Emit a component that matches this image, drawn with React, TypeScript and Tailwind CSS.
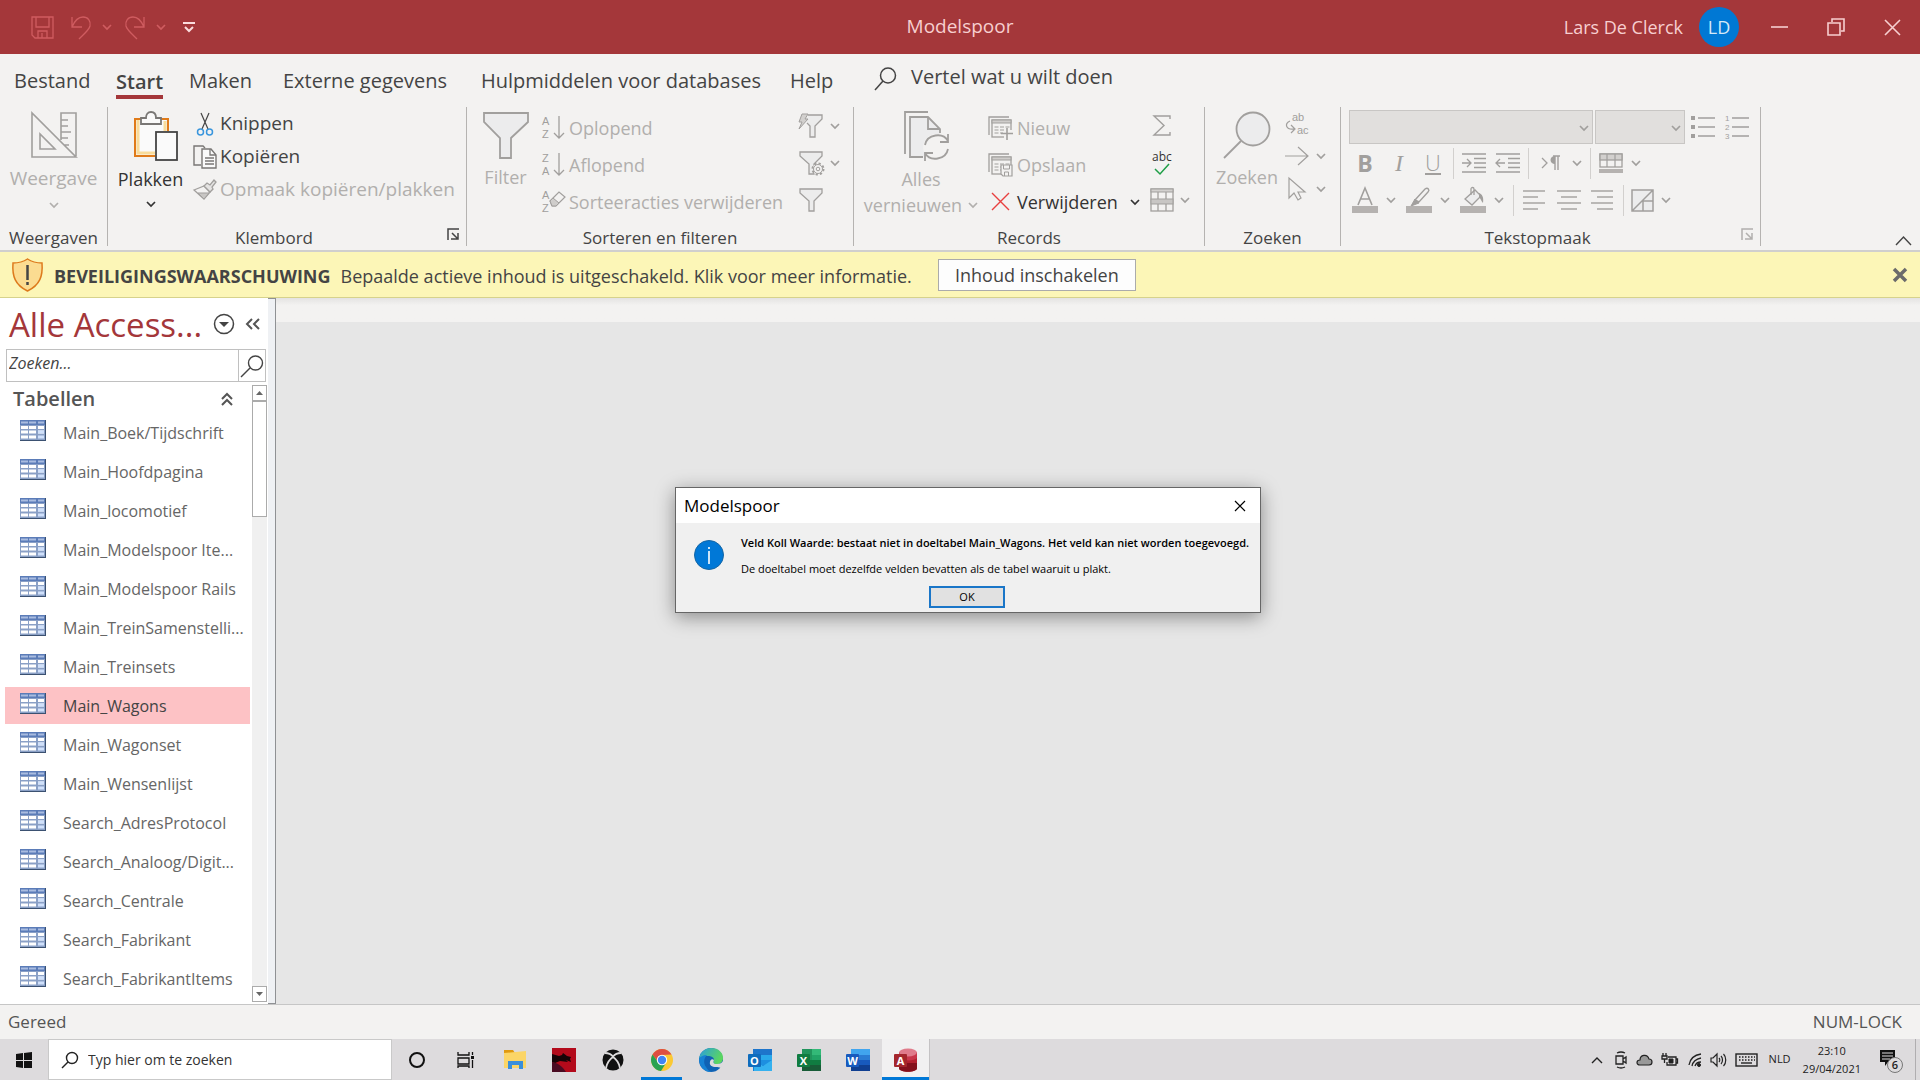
import type { ReactNode } from 'react';

function Svg({ w, h, className = '', children }: { w: number; h: number; className?: string; children: ReactNode }) {
  return (
    <svg width={w} height={h} viewBox={`0 0 ${w} ${h}`} fill="none" stroke="currentColor" className={`shrink-0 overflow-visible ${className}`} aria-hidden="true">
      {children}
    </svg>
  );
}

function Chevron({ className = '' }: { className?: string }) {
  return (
    <Svg w={10} h={6} className={className}>
      <path d="M1 1l4 4 4-4" strokeWidth="1.7" />
    </Svg>
  );
}

function TitleBar() {
  return (
    <header className="flex h-[54px] shrink-0 items-center bg-[#a4373a] text-[#f7cfd0]">
      <div className="flex flex-1 items-center text-[#cf5c60]">
        <button aria-label="Opslaan" className="ml-[31px]">
          <Svg w={23} h={23}>
            <path d="M1 1h21v21H4l-3-3zM5 1v10h13V1M7 22v-7h9v7M11 17v5" strokeWidth="1.3" />
          </Svg>
        </button>
        <button aria-label="Ongedaan maken" className="ml-4 flex items-center gap-2.5">
          <Svg w={22} h={25}>
            <path d="M2 2v10h10M2 12C5 5 9 2 13 2c5 0 8 4 7 9-1 4-6 8-11 13" strokeWidth="1.3" />
          </Svg>
          <Chevron />
        </button>
        <button aria-label="Opnieuw" className="ml-3 flex items-center gap-2.5">
          <Svg w={22} h={25}>
            <path d="M20 2v10H10M20 12C17 5 13 2 9 2 4 2 1 6 2 11c1 4 6 8 11 13" strokeWidth="1.3" />
          </Svg>
          <Chevron />
        </button>
        <button aria-label="Werkbalk Snelle toegang aanpassen" className="ml-[17px] text-[#fbdcdd]">
          <Svg w={12} h={11}>
            <path d="M0 1h12M2 5l4 4 4-4" strokeWidth="2" />
          </Svg>
        </button>
      </div>
      <h1 className="pb-0.5 text-[19px]">Modelspoor</h1>
      <div className="flex flex-1 items-center justify-end">
        <span className="text-lg">Lars De Clerck</span>
        <span className="ml-4 flex size-10 items-center justify-center rounded-full bg-[#0078d4] text-lg text-[#d5e9f8]">LD</span>
        <button aria-label="Minimaliseren" className="ml-8">
          <Svg w={17} h={18}><path d="M0 9h17" strokeWidth="1.6" /></Svg>
        </button>
        <button aria-label="Verkleinen" className="ml-[39px]">
          <Svg w={18} h={18}><path d="M1 5h12v12H1zM5 4V1h12v12h-3" strokeWidth="1.6" /></Svg>
        </button>
        <button aria-label="Sluiten" className="mr-[19px] ml-[39px]">
          <Svg w={17} h={17}><path d="M1 1l15 15M16 1L1 16" strokeWidth="1.6" /></Svg>
        </button>
      </div>
    </header>
  );
}

const tabs = [
  { label: 'Bestand', cls: 'w-[102px]' },
  { label: 'Start', cls: 'w-[73px]' },
  { label: 'Maken', cls: 'w-[94px]' },
  { label: 'Externe gegevens', cls: 'w-[198px]' },
  { label: 'Hulpmiddelen voor databases', cls: 'w-[309px]' },
  { label: 'Help', cls: 'w-[84px]' },
];

function Tabs() {
  return (
    <nav className="flex h-[50px] items-center pl-3.5 text-xl text-[#444]">
      {tabs.map((t) => (
        <div key={t.label} className={`shrink-0 ${t.cls}`}>
          {t.label === 'Start' ? (
            <button className="mt-2 border-b-4 border-[#a4373a] leading-[27px] font-semibold whitespace-nowrap">{t.label}</button>
          ) : (
            <button className="mt-1 leading-[27px] whitespace-nowrap">{t.label}</button>
          )}
        </div>
      ))}
      <button className="flex items-center gap-3.5 pb-1 whitespace-nowrap">
        <Svg w={23} h={24} className="mt-1">
          <circle cx="14" cy="8.500" r="7.500" strokeWidth="1.5" />
          <path d="M9 14l-8 9" strokeWidth="1.500" />
        </Svg>
        Vertel wat u wilt doen
      </button>
    </nav>
  );
}

function Launcher({ className = '' }: { className?: string }) {
  return (
    <button aria-label="Dialoogvenster openen" className={className}>
      <Svg w={13} h={13}>
        <path d="M1 12V1h11M5 5l6 6M11 5v6H4" strokeWidth="1.5" />
      </Svg>
    </button>
  );
}

function Group({ label, cls, launcher, children }: { label: string; cls: string; launcher?: string; children: ReactNode }) {
  return (
    <section aria-label={label} className={`flex h-[139px] shrink-0 flex-col border-r border-[#b5b3b1] ${cls}`}>
      <div className="flex h-[122px] shrink-0">{children}</div>
      <div className={`relative flex h-[18px] items-center justify-center text-[17px] leading-[18px] text-[#444] ${launcher ? 'pr-[26px]' : ''}`}>
        {label}
        {launcher && <Launcher className={`absolute right-1.5 bottom-1.5 ${launcher}`} />}
      </div>
    </section>
  );
}

function Row({ icon, label, cls = 'h-[37px] gap-[5px] text-lg' }: { icon: ReactNode; label: string; cls?: string }) {
  return (
    <button className={`flex items-center whitespace-nowrap ${cls}`}>
      <span className="flex w-6 shrink-0 justify-center">{icon}</span>
      {label}
    </button>
  );
}

function SortIcon({ top, bottom, eraser }: { top: string; bottom: string; eraser?: boolean }) {
  return (
    <Svg w={26} h={25} className='font-["Liberation_Sans",sans-serif] text-[#a19f9d]'>
      <text x="3" y="10" fontSize="11" fill="currentColor" stroke="none">{top}</text>
      <text x="3" y="23" fontSize="11" fill="currentColor" stroke="none">{bottom}</text>
      {eraser ? (
        <>
          <path d="M11 12l9-9 6 5-9 9-4 0z" strokeWidth="1.200" />
          <path d="M11 12l3-3 6 5-3 3h-4z" fill="#cfcdcb" strokeWidth="1" />
        </>
      ) : (
        <path d="M20 1v22M15 18l5 5 5-5" strokeWidth="1.3" />
      )}
    </Svg>
  );
}

function FunnelIcon({ kind }: { kind: 'bolt' | 'gear' | 'plain' }) {
  return (
    <Svg w={26} h={26} className="text-[#a19f9d]">
      {kind === 'bolt' ? (
        <>
          <path d="M10 2h14v4l-7 7v11h-5V13l-3-3" fill="#ececec" strokeWidth="1.3" />
          <path d="M4 1h6L7 6h3L1 16l3-7H1z" fill="#d2d0ce" strokeWidth="1" />
        </>
      ) : (
        <path d="M2 2h22v4l-8 8v10h-5V14L2 6z" fill="#ececec" strokeWidth="1.3" />
      )}
      {kind === 'gear' && (
        <>
          <circle cx="20" cy="19" r="5.500" fill="#f3f2f1" strokeWidth="2" strokeDasharray="2.2 2.1" />
          <circle cx="20" cy="19" r="4.500" fill="#f3f2f1" strokeWidth="1" />
          <circle cx="20" cy="19" r="1.800" strokeWidth="1" />
        </>
      )}
    </Svg>
  );
}

function RecordIcon({ save }: { save?: boolean }) {
  return (
    <Svg w={25} h={24} className="text-[#a19f9d]">
      <path d="M1 19V1h20" strokeWidth="1.300" />
      <rect x="4" y="4" width="19" height="17" strokeWidth="1.3" />
      <rect x="4" y="4" width="19" height="3" fill="#cfcdcb" strokeWidth="1" />
      <path d="M6.500 11h4M12 11h4M17.500 11h4M6.500 14h4M12 14h4M6.500 17h4M12 17h3" strokeWidth="1.200" />
      {save ? (
        <>
          <path d="M13 12h11v11H15l-2-2z" fill="#f3f2f1" strokeWidth="1.200" />
          <path d="M15.500 12v4h6v-4M16.500 23v-4h4v4" strokeWidth="1" />
        </>
      ) : (
        <>
          <path d="M16 14h8v8h-8z" fill="#f3f2f1" stroke="none" />
          <path d="M19 12v12M13 17.500h12" strokeWidth="1.600" />
        </>
      )}
    </Svg>
  );
}

function RowsIcon() {
  return (
    <Svg w={24} h={24} className="text-[#a19f9d]">
      <rect x="1" y="1" width="22" height="22" strokeWidth="1.3" />
      <rect x="1" y="1" width="22" height="3" fill="#d2d0ce" strokeWidth="1" />
      <rect x="1" y="11" width="22" height="5" fill="#c8c6c4" strokeWidth="1" />
      <path d="M8 4v7M16 4v7M8 16v7M16 16v7" strokeWidth="1.3" />
    </Svg>
  );
}

function Klembord() {
  return (
    <Group label="Klembord" cls="w-[359px]" launcher="text-[#444]">
      <button className="flex w-[85px] flex-col items-center pt-1 text-lg leading-6 text-[#333]">
        <Svg w={46} h={50} className="ml-2.5">
          <path d="M8 8H2v37h20" stroke="#e07b1a" strokeWidth="2" fill="none" />
          <path d="M28 8h7v12" stroke="#e07b1a" strokeWidth="2" />
          <path d="M4 9h29v11H23v24H4z" fill="#fafafa" stroke="none" />
          <path d="M5 9v33h17M32 10v10" stroke="#f9dc9a" strokeWidth="3" />
          <path d="M8 13V7h5c0-4 2-6 5-6s5 2 5 6h5v6z" fill="#fafafa" stroke="#797775" strokeWidth="1.800" />
          <rect x="23" y="21" width="21" height="28" fill="#fafafa" stroke="#444" strokeWidth="1.800" />
        </Svg>
        <span className="mt-1.5">Plakken</span>
        <Chevron className="mt-2.5" />
      </button>
      <div className="flex flex-col items-start text-[#444]">
        <Row cls="h-[33px] gap-[3px] text-[19px]" label="Knippen" icon={
          <Svg w={18} h={24}>
            <path d="M5 1l7 16M13 1L6 17" strokeWidth="1.200" />
            <g stroke="#3a96dd" strokeWidth="1.500"><circle cx="4.500" cy="20" r="3" /><circle cx="13.500" cy="20" r="3" /></g>
          </Svg>
        } />
        <Row cls="h-[33px] gap-[3px] text-[19px]" label="Kopiëren" icon={
          <Svg w={24} h={24} className="text-[#797775]">
            <path d="M8 20H1V1h9l2 2" strokeWidth="1.400" />
            <path d="M9 4h9l5 6v13H9z" fill="#fafafa" strokeWidth="1.400" />
            <path d="M17 4v6h6M12 13h9M12 16h9M12 19h9" strokeWidth="1.300" />
          </Svg>
        } />
        <Row cls="h-[33px] gap-[3px] text-[19px] text-[#b1afad]" label="Opmaak kopiëren/plakken" icon={
          <Svg w={24} h={22} className="text-[#a19f9d]">
            <path d="M1 11l10-4 6 6-6 7z" fill="#f3f2f1" strokeWidth="1.300" />
            <path d="M5 14l11 0-5 6z" fill="#c8c6c4" strokeWidth="1" />
            <path d="M11 7l3-3 3 2 4-5 2 2-4 5 1 2-3 3z" fill="#e4e3e2" strokeWidth="1.300" />
          </Svg>
        } />
      </div>
    </Group>
  );
}

function Sorteren() {
  return (
    <Group label="Sorteren en filteren" cls="w-[387px]">
      <button className="flex w-[73px] flex-col items-center pt-[5px] pl-1 text-lg leading-6 text-[#b1afad]">
        <Svg w={46} h={47} className="text-[#a19f9d]">
          <path d="M1 1h44v9L28 26v20H17V26L1 10z" fill="#ececed" strokeWidth="1.800" />
        </Svg>
        <span className="mt-1.5">Filter</span>
      </button>
      <div className="flex flex-1 flex-col items-start pt-0.5 text-[#b1afad]">
        <Row label="Oplopend" icon={<SortIcon top="A" bottom="Z" />} />
        <Row label="Aflopend" icon={<SortIcon top="Z" bottom="A" />} />
        <Row label="Sorteeracties verwijderen" icon={<SortIcon top="A" bottom="Z" eraser />} />
      </div>
      <div className="flex w-[55px] shrink-0 flex-col text-[#a19f9d]">
        <button aria-label="Selectie" className="flex h-[37px] items-center gap-1.5"><FunnelIcon kind="bolt" /><Chevron /></button>
        <button aria-label="Geavanceerd" className="flex h-[37px] items-center gap-1.5"><FunnelIcon kind="gear" /><Chevron /></button>
        <button aria-label="Filter in-/uitschakelen" className="flex h-[37px] items-center"><FunnelIcon kind="plain" /></button>
      </div>
    </Group>
  );
}

function Records() {
  return (
    <Group label="Records" cls="w-[351px]">
      <button className="flex w-[134px] flex-col items-center pt-1 text-lg leading-[26px] whitespace-nowrap text-[#b1afad]">
        <Svg w={46} h={50} className="ml-3 text-[#a19f9d]">
          <path d="M1 43V1h23" strokeWidth="1.800" />
          <path d="M19 46H6V6h18l12 12v4" fill="#ececed" strokeWidth="1.800" />
          <path d="M24 6v12h12" strokeWidth="1.800" />
          <circle cx="32" cy="36" r="12" fill="#f3f2f1" strokeWidth="1.800" stroke="#f3f2f1" />
          <path d="M21 34c2-11 18-13 23-4M44 23v8h-8M44 38c-2 11-18 13-23 4M21 50v-8h8" strokeWidth="1.800" />
        </Svg>
        <span className="mt-[5px]">Alles</span>
        <span className="flex items-center gap-1.5">vernieuwen <Chevron /></span>
      </button>
      <div className="flex w-[157px] flex-col items-start pt-0.5 text-[#b1afad]">
        <Row label="Nieuw" icon={<RecordIcon />} />
        <Row label="Opslaan" icon={<RecordIcon save />} />
        <div className="flex w-full items-center text-[#333]">
          <Row label="Verwijderen" icon={<Svg w={19} h={19}><path d="M1 1l17 17M18 1L1 18" stroke="#e8403f" strokeWidth="1.400" /></Svg>} />
          <button aria-label="Verwijderopties" className="ml-3"><Chevron /></button>
        </div>
      </div>
      <div className="flex shrink-0 flex-col items-start pl-[3px] text-[#a19f9d]">
        <button aria-label="Totalen" className="flex h-[37px] w-7 items-center justify-center">
          <Svg w={18} h={21}><path d="M17 4V1H1l10 9.500L1 20h16v-3" strokeWidth="1.400" /></Svg>
        </button>
        <button aria-label="Spelling" className="flex h-[37px] w-7 flex-col items-center justify-center text-xs leading-3 text-[#333]">
          abc
          <Svg w={16} h={12}><path d="M1 6l5 5 9-10" stroke="#1e9e46" strokeWidth="1.500" /></Svg>
        </button>
        <button aria-label="Meer" className="flex h-[37px] items-center gap-1.5 pl-0.5"><RowsIcon /><Chevron /></button>
      </div>
    </Group>
  );
}

function Zoeken() {
  return (
    <Group label="Zoeken" cls="w-[136px]">
      <button className="flex w-20 flex-col items-center pt-1 pl-1 text-lg leading-6 text-[#b1afad]">
        <Svg w={48} h={48} className="text-[#a19f9d]">
          <circle cx="30" cy="18" r="16.500" fill="#ececed" strokeWidth="1.800" />
          <path d="M18 30L1 47" strokeWidth="1.800" />
        </Svg>
        <span className="mt-1.5">Zoeken</span>
      </button>
      <div className="flex flex-col text-[#a19f9d]">
        <button aria-label="Vervangen" className="flex h-8 items-center">
          <Svg w={26} h={25} className='font-["Liberation_Sans",sans-serif]'>
            <text x="7" y="10" fontSize="11" fill="currentColor" stroke="none">ab</text>
            <text x="12" y="23" fontSize="11" fill="currentColor" stroke="none">ac</text>
            <path d="M5 10c-6 3-4 9 4 8M6 14l4 4-4 4" strokeWidth="1.200" />
          </Svg>
        </button>
        <button aria-label="Ga naar" className="flex h-[34px] items-center gap-[7px]">
          <Svg w={24} h={20}><path d="M0 10h23M13 1l10 9-10 9" strokeWidth="1.200" /></Svg><Chevron />
        </button>
        <button aria-label="Selecteren" className="flex h-8 items-center gap-[7px]">
          <Svg w={24} h={24}><path d="M4 1v20l5-5 4 7 3-2-3-6h7z" fill="#f3f2f1" strokeWidth="1.200" /></Svg><Chevron />
        </button>
      </div>
    </Group>
  );
}

function Combo({ label, cls }: { label: string; cls: string }) {
  return (
    <div className={`relative h-[34px] ${cls}`}>
      <select aria-label={label} disabled className="h-full w-full appearance-none border border-[#c8c6c4] bg-[#e1dfdd]" />
      <Chevron className="absolute top-[15px] right-1 text-[#a19f9d]" />
    </div>
  );
}

function Divider() {
  return <span className="h-[31px] w-px bg-[#d2d0ce]" />;
}

function Lines({ rows }: { rows: [number, number][] }) {
  return (
    <Svg w={24} h={20}>
      {rows.map(([a, b], i) => (
        <path key={i} d={`M${a} ${1 + i * 6}H${b}`} strokeWidth="1.400" />
      ))}
    </Svg>
  );
}

function ColorButton({ label, children }: { label: string; children: ReactNode }) {
  return (
    <button aria-label={label} className="flex items-center gap-2">
      <span className="flex flex-col items-center">
        {children}
        <span className="h-[7px] w-[26px] bg-[#b5b2b0]" />
      </span>
      <Chevron />
    </button>
  );
}

function Tekstopmaak() {
  return (
    <Group label="Tekstopmaak" cls="w-[420px]" launcher="text-[#b1afad]">
      <div className="flex flex-1 flex-col pt-[3px] pl-2 text-[#a19f9d]">
        <div className="flex items-center">
          <Combo label="Lettertype" cls="w-[244px]" />
          <Combo label="Tekengrootte" cls="ml-0.5 w-[90px]" />
          <button aria-label="Opsommingstekens" className="ml-1.5">
            <Svg w={24} h={22}>
              <path d="M0 2h4M0 11h4M0 20h4" strokeWidth="4" />
              <path d="M7 2h17M7 11h17M7 20h17" strokeWidth="1.300" />
            </Svg>
          </button>
          <button aria-label="Nummering" className="ml-2.5">
            <Svg w={24} h={26} className='font-["Liberation_Sans",sans-serif]'>
              <text x="0" y="7" fontSize="8" fill="currentColor" stroke="none">1</text>
              <text x="0" y="16" fontSize="8" fill="currentColor" stroke="none">2</text>
              <text x="0" y="25" fontSize="8" fill="currentColor" stroke="none">3</text>
              <path d="M7 4h17M7 13h17M7 22h17" strokeWidth="1.300" />
            </Svg>
          </button>
        </div>
        <div className="flex h-[38px] items-center">
          <button aria-label="Vet" className="w-8 text-[23px] leading-7 font-bold">B</button>
          <button aria-label="Cursief" className='w-9 font-["Liberation_Serif",serif] text-2xl leading-7 italic'>I</button>
          <button aria-label="Onderstrepen" className="mr-1 flex w-8 flex-col items-center text-[22px] leading-[22px] font-light">
            U
            <span className="h-0.5 w-4 bg-[#a19f9d]" />
          </button>
          <Divider />
          <button aria-label="Inspringing vergroten" className="ml-2">
            <Svg w={24} h={20}><path d="M0 1h24M12 5.500h12M12 10h12M12 14.500h12M0 19h24M0 10h9M5 6l4 4-4 4" strokeWidth="1.300" /></Svg>
          </button>
          <button aria-label="Inspringing verkleinen" className="mr-2 ml-2.5">
            <Svg w={24} h={20}><path d="M0 1h24M12 5.500h12M12 10h12M12 14.500h12M0 19h24M0 10h9M4 6l-4 4 4 4" strokeWidth="1.300" /></Svg>
          </button>
          <Divider />
          <button aria-label="Leesrichting" className="mr-2 ml-3 flex items-center gap-3">
            <Svg w={19} h={16}>
              <path d="M1 3l5 5-5 5" strokeWidth="1.300" />
              <path d="M14 1v14M17 1v14M12 1h7" strokeWidth="1.400" />
              <path d="M14 1v8c-6 0-6-8 0-8" fill="currentColor" stroke="none" />
            </Svg>
            <Chevron />
          </button>
          <Divider />
          <button aria-label="Rasterlijnen" className="ml-2 flex items-center gap-2">
            <Svg w={24} h={20}>
              <rect x="1" y="1" width="22" height="13" strokeWidth="1.300" />
              <rect x="1" y="1" width="22" height="6" fill="#d2d0ce" strokeWidth="1.300" />
              <path d="M8 1v13M16 1v13" strokeWidth="1.200" />
              <path d="M0 18h24" strokeWidth="4" stroke="#b5b2b0" />
            </Svg>
            <Chevron />
          </button>
        </div>
        <div className="flex h-9 items-center">
          <div className="mr-[9px] ml-[3px] flex gap-[10px]">
            <ColorButton label="Tekstkleur">
              <Svg w={18} h={19}><path d="M2 18L9 1l7 17M5 12h8" strokeWidth="1.600" /></Svg>
            </ColorButton>
            <ColorButton label="Markeren">
              <Svg w={22} h={19}>
                <path d="M7 13L17 2c3-2 5 1 3 3l-9 10z" strokeWidth="1.400" />
                <path d="M7 12l4 4-8 3z" fill="currentColor" strokeWidth="1" />
              </Svg>
            </ColorButton>
            <ColorButton label="Achtergrondkleur">
              <Svg w={24} h={19}>
                <path d="M4 12l10-9 6 6-9 9z" fill="#ececed" strokeWidth="1.300" />
                <path d="M10 8V2c0-2 3-2 3 0v6" strokeWidth="1.300" />
                <path d="M18 6c3 1 5 4 4 10-2-2-2-4-4-6z" fill="currentColor" stroke="none" />
              </Svg>
            </ColorButton>
          </div>
          <Divider />
          <div className="mr-2 ml-[9px] flex gap-2.5">
            <button aria-label="Links uitlijnen"><Lines rows={[[0, 22], [0, 15], [0, 22], [0, 15]]} /></button>
            <button aria-label="Centreren"><Lines rows={[[0, 24], [4, 20], [0, 24], [4, 20]]} /></button>
            <button aria-label="Rechts uitlijnen"><Lines rows={[[0, 22], [6, 22], [0, 22], [6, 22]]} /></button>
          </div>
          <Divider />
          <button aria-label="Alternatieve rijkleur" className="ml-[7px] flex items-center gap-[7px]">
            <Svg w={23} h={23}>
              <path d="M1 1h21v21H1zM22 1L1 22M12 12h10M12 12v10" fill="#ececed" strokeWidth="1.500" />
            </Svg>
            <Chevron />
          </button>
        </div>
      </div>
    </Group>
  );
}

function Ribbon() {
  return (
    <div className="shrink-0 border-b-2 border-[#d0cfce] bg-[#f3f2f1]">
      <Tabs />
      <div className="flex h-[146px] pt-[3px]">
        <Group label="Weergaven" cls="w-[108px]">
          <button className="flex w-full flex-col items-center pt-[5px] text-[19px] leading-6 text-[#b1afad]">
            <Svg w={46} h={46} className="text-[#a19f9d]">
              <path d="M1 1v44h44zM9 22v15h15zM30 28V1h15v43M30 8h7M30 14h7M30 20h10M30 26h7M33 33h5" strokeWidth="1.600" />
            </Svg>
            <span className="mt-2">Weergave</span>
            <Chevron className="mt-3" />
          </button>
        </Group>
        <Klembord />
        <Sorteren />
        <Records />
        <Zoeken />
        <Tekstopmaak />
        <button aria-label="Lint samenvouwen" className="mr-2 mb-1 ml-auto self-end text-[#444]">
          <Svg w={17} h={10}><path d="M1 9l7.500-8L16 9" strokeWidth="1.400" /></Svg>
        </button>
      </div>
    </div>
  );
}

function SecurityBar() {
  return (
    <div role="alert" className="flex h-[46px] shrink-0 items-center border-b border-[#d6d28c] bg-[#fcf6b7] pr-3 pl-[11px] whitespace-nowrap text-[#444]">
      <Svg w={33} h={36}>
        <path d="M16.500 2C12 5 7 6 2 6c-1 13 2 22 14.500 28C29 28 32 19 31 6 26 6 21 5 16.500 2z" fill="#fbdc91" stroke="#dd7a1c" strokeWidth="1.500" />
        <path d="M16.500 8v15M16.500 25v3" stroke="#444" strokeWidth="2.500" />
      </Svg>
      <strong className="ml-2.5 pt-0.5 text-lg font-bold">BEVEILIGINGSWAARSCHUWING</strong>
      <span className="ml-2.5 pt-0.5 text-lg">Bepaalde actieve inhoud is uitgeschakeld. Klik voor meer informatie.</span>
      <button className="ml-[26px] h-8 w-[198px] border border-[#ababab] bg-[#fdfdfd] text-lg leading-6">Inhoud inschakelen</button>
      <button aria-label="Waarschuwing sluiten" className="ml-auto text-[#6b6b6b]">
        <Svg w={16} h={16}><path d="M2 2l12 12M14 2L2 14" strokeWidth="3.500" /></Svg>
      </button>
    </div>
  );
}

function TableIcon() {
  return (
    <Svg w={26} h={21} className="mb-1">
      <rect width="26" height="21" fill="#3b5171" stroke="none" />
      <rect width="25" height="20" fill="#8aa0c6" stroke="none" />
      <rect width="25" height="5" fill="#5b7cb8" stroke="none" />
      <path d="M1 2.500h7M9 2.500h7M18 2.500h6" stroke="#a9bce0" strokeWidth="2" />
      <path d="M1 7.500h7M9 7.500h7M18 7.500h6M1 12h7M9 12h7M18 12h6M1 17h7M9 17h7" stroke="#fff" strokeWidth="3" />
      <path d="M18 12h6M18 17h6" stroke="#cfe0fb" strokeWidth="3" />
    </Svg>
  );
}

const tables = [
  'Main_Boek/Tijdschrift',
  'Main_Hoofdpagina',
  'Main_locomotief',
  'Main_Modelspoor Ite...',
  'Main_Modelspoor Rails',
  'Main_TreinSamenstelli...',
  'Main_Treinsets',
  'Main_Wagons',
  'Main_Wagonset',
  'Main_Wensenlijst',
  'Search_AdresProtocol',
  'Search_Analoog/Digit...',
  'Search_Centrale',
  'Search_Fabrikant',
  'Search_FabrikantItems',
];

function Sidebar() {
  return (
    <aside className="flex w-[276px] shrink-0 border-r border-[#8f9194] bg-white">
      <div className="flex min-w-0 flex-1 flex-col">
        <div className="flex h-[51px] items-center pl-[9px]">
          <h2 className="w-[204px] pt-0.5 text-[33px] whitespace-nowrap text-[#a4373a]">Alle Access...</h2>
          <button aria-label="Navigatiemenu" className="text-[#444]">
            <Svg w={22} h={22}>
              <circle cx="11" cy="11" r="9.500" strokeWidth="1.500" />
              <path d="M6 9h10l-5 5z" fill="currentColor" stroke="none" />
            </Svg>
          </button>
          <button aria-label="Navigatiedeelvenster sluiten" className="ml-[11px] text-[#555]">
            <Svg w={14} h={12}><path d="M6 1L1 6l5 5M13 1L8 6l5 5" strokeWidth="2" /></Svg>
          </button>
        </div>
        <div className="mr-0.5 ml-1.5 flex h-[33px] shrink-0 border border-[#c0c0c0]">
          <input aria-label="Zoeken" placeholder="Zoeken..." className="min-w-0 flex-1 px-0.5 pb-1.5 text-base italic outline-none placeholder:text-[#444]" />
          <button aria-label="Zoeken starten" className="flex w-[27px] items-center justify-center border-l border-[#c0c0c0] text-[#444]">
            <Svg w={24} h={24}>
              <circle cx="15.500" cy="9" r="7" strokeWidth="1.400" />
              <path d="M10 14l-9 9" strokeWidth="1.400" />
            </Svg>
          </button>
        </div>
        <div className="flex min-h-0 flex-1 pt-0.5">
          <div className="flex min-w-0 flex-1 flex-col overflow-hidden">
            <button className="flex h-[30px] shrink-0 items-center justify-between pr-[19px] pl-[13px] text-xl font-semibold text-[#555]">
              Tabellen
              <Svg w={12} h={14}><path d="M1 7l5-5 5 5M1 13l5-5 5 5" strokeWidth="2" /></Svg>
            </button>
            <ul className="flex flex-col gap-0.5 pr-0.5 pl-[5px]">
              {tables.map((t) => (
                <li key={t}>
                  <button className={`flex h-[37px] w-full items-center gap-[17px] pl-[15px] text-base whitespace-nowrap ${t === 'Main_Wagons' ? 'bg-[#fdc2c5] text-[#444]' : 'text-[#666]'}`}>
                    <TableIcon />
                    {t}
                  </button>
                </li>
              ))}
            </ul>
          </div>
          <div className="mt-px mr-px mb-0.5 flex w-[15px] shrink-0 flex-col bg-[#f0f0f0]">
            <button aria-label="Omhoog schuiven" className="flex h-4 items-center justify-center border border-[#ababab] bg-white text-[#666]">
              <Svg w={7} h={4}><path d="M0 4l3.500-4L7 4z" fill="currentColor" stroke="none" /></Svg>
            </button>
            <div className="h-[116px] border border-[#ababab] bg-white" />
            <button aria-label="Omlaag schuiven" className="mt-auto flex h-4 items-center justify-center border border-[#ababab] bg-white text-[#666]">
              <Svg w={7} h={4}><path d="M0 0l3.500 4L7 0z" fill="currentColor" stroke="none" /></Svg>
            </button>
          </div>
        </div>
      </div>
      <div className="w-[7px] border-y border-[#8f9194] bg-[#eff1f4]" />
    </aside>
  );
}

function Dialog() {
  return (
    <div role="dialog" aria-label="Modelspoor" className="absolute top-[487px] left-[675px] w-[586px] border border-[#666] bg-[#f0f0f0] text-black shadow-[0_4px_18px_rgba(0,0,0,0.4)]">
      <div className="flex h-[35px] items-center justify-between bg-white pr-3.5 pl-2 text-[17px]">
        Modelspoor
        <button aria-label="Sluiten"><Svg w={12} h={12}><path d="M1 1l10 10M11 1L1 11" strokeWidth="1.200" /></Svg></button>
      </div>
      <div className="flex items-start pt-3 pl-[18px]">
        <Svg w={30} h={30} className="mt-[5px]">
          <circle cx="15" cy="15" r="14.500" fill="#0078d7" stroke="#1566a5" />
          <path d="M15 7v2M15 11v13" stroke="#fff" strokeWidth="1.600" />
        </Svg>
        <div className="ml-[17px] text-[11px] leading-4 whitespace-nowrap">
          <p className="font-semibold">Veld Koll Waarde: bestaat niet in doeltabel Main_Wagons. Het veld kan niet worden toegevoegd.</p>
          <p className="mt-2.5">De doeltabel moet dezelfde velden bevatten als de tabel waaruit u plakt.</p>
        </div>
      </div>
      <div className="flex justify-center pt-[9px] pr-0.5 pb-1">
        <button className="h-[22px] w-[76px] border-2 border-[#1a76c8] bg-[#e1e1e1] text-[11px] leading-4">OK</button>
      </div>
    </div>
  );
}

function OfficeIcon({ letter, tile, bands, round }: { letter: string; tile: string; bands: [string, string, string, string]; round?: boolean }) {
  return (
    <Svg w={26} h={24}>
      {round ? (
        <g stroke="none">
          <path d="M6 4h18v16c0 5-18 5-18 0z" fill={bands[2]} />
          <path d="M6 15h18v5c0 5-18 5-18 0z" fill={bands[3]} />
          <path d="M6 5c2 4 16 4 18 0v5c-2 3-12 3-18 1z" fill={bands[1]} />
          <ellipse cx="15" cy="4.500" rx="9" ry="4" fill={bands[0]} />
        </g>
      ) : (
        <g stroke="none">
          <rect x="6" y="1" width="19" height="6" fill={bands[0]} />
          <rect x="6" y="7" width="19" height="5" fill={bands[1]} />
          <rect x="6" y="12" width="19" height="5" fill={bands[2]} />
          <rect x="6" y="17" width="19" height="6" fill={bands[3]} />
        </g>
      )}
      {letter === 'O' && <path d="M7 12l9 6 9-6v11H7z" fill="#35b1ef" stroke="none" />}
      {letter === 'X' && <path d="M6 1h10v11H6z" fill="#21945c" stroke="none" />}
      <rect x="1" y="6" width="13" height="13" rx="1" fill={tile} stroke="none" />
      <text x="7.500" y="16.500" fontSize="11" fontWeight="700" textAnchor="middle" fill="#fff" stroke="none">{letter}</text>
    </Svg>
  );
}

const apps: { label: string; cls?: string; icon: ReactNode }[] = [
  { label: 'Cortana', icon: <Svg w={18} h={18}><circle cx="9" cy="9" r="7" stroke="#111" strokeWidth="2" /></Svg> },
  {
    label: 'Taakweergave',
    icon: <Svg w={18} h={18}><path d="M1 1v3h11V1M1 7h11v6H1zM1 17v-2h11v2M15.500 1v3M15.500 9v8" stroke="#111" strokeWidth="1.300" /><path d="M14 6.500h3" stroke="#111" strokeWidth="3" /></Svg>,
  },
  {
    label: 'Verkenner',
    icon: (
      <Svg w={24} h={20}>
        <g stroke="none">
          <path d="M1 0h9l2 3H1z" fill="#e09a10" />
          <path d="M1 3l22-2v17H1z" fill="#fbd567" />
          <path d="M5 19v-8h15v8h-4v-4H9v4z" fill="#3a8fdb" />
        </g>
      </Svg>
    ),
  },
  {
    label: 'Dragon Center',
    icon: (
      <Svg w={24} h={24}>
        <g stroke="none">
          <rect width="24" height="24" fill="#b30a1b" />
          <path d="M0 6l7 2 3-1 1-2 4 3 4 1-1 2 1 3-5-2 2 2-8-1-5 2-3-1z" fill="#160407" />
          <path d="M0 14c6 1 10 4 14 10H0z" fill="#4a0b22" />
        </g>
      </Svg>
    ),
  },
  {
    label: 'Xbox',
    icon: (
      <Svg w={22} h={22}>
        <circle cx="11" cy="11" r="10.500" fill="#111" stroke="none" />
        <path d="M4 19c1-5 4-9 7-11 3 2 6 6 7 11M11 7.500C9 5 6 4 3 4M11 7.500c2-2.500 5-3.500 8-3.500" stroke="#dddbdc" strokeWidth="1.800" />
      </Svg>
    ),
  },
  {
    label: 'Chrome',
    cls: 'border-b-[3px] border-[#0078d7] pt-[3px]',
    icon: (
      <Svg w={22} h={22}>
        <g stroke="none">
          <circle cx="11" cy="11" r="11" fill="#fbc934" />
          <path d="M1.500 5.500A11 11 0 0 1 20.500 5.500L11 6 7 13z" fill="#de4f42" />
          <path d="M1.500 5.500A11 11 0 0 0 10 22l5-8-8-1z" fill="#28a352" />
          <circle cx="11" cy="11" r="5.200" fill="#fff" />
          <circle cx="11" cy="11" r="4.200" fill="#4285f4" />
        </g>
      </Svg>
    ),
  },
  {
    label: 'Edge',
    icon: (
      <Svg w={24} h={24}>
        <defs>
          <linearGradient id="edge" x1="0" y1="0" x2="1" y2="0.4">
            <stop offset="0" stopColor="#2a9de0" />
            <stop offset="1" stopColor="#5bd65f" />
          </linearGradient>
        </defs>
        <g stroke="none">
          <circle cx="12" cy="12" r="12" fill="#1062b4" />
          <path d="M0 11C1 4 6 0 12 0c8 0 12 5 12 10 0 4-3 6-6 6-4 0-4-2-3-4 0-3-3-4-6-4-5 0-8 2-9 3z" fill="url(#edge)" />
          <path d="M0 11c1-2 4-4 8-4-3 3-4 8-1 12 1 2 3 4 5 5C5 24 0 18 0 11z" fill="#1782d4" />
          <path d="M15 12c-1 2-1 4 3 4 3 0 5-1 6-3v4l-2 3c-2-1-3-1-5-1-4 0-7-2-6-5 0-2 2-4 4-2z" fill="#dddbdc" />
        </g>
      </Svg>
    ),
  },
  { label: 'Outlook', icon: <OfficeIcon letter="O" tile="#0f6cbd" bands={['#1e75cb', '#29a8ea', '#1d8fe0', '#1683d8']} /> },
  { label: 'Excel', icon: <OfficeIcon letter="X" tile="#107c41" bands={['#33b978', '#21a366', '#107c41', '#185c37']} /> },
  { label: 'Word', icon: <OfficeIcon letter="W" tile="#185abd" bands={['#41a5ee', '#2b7cd3', '#185abd', '#103f91']} /> },
  {
    label: 'Access',
    cls: 'border-b-[3px] border-[#0078d7] bg-[#f1f0f1] pt-[3px]',
    icon: <OfficeIcon letter="A" tile="#a4262c" bands={['#e07b8b', '#c8364a', '#b3202f', '#84101c']} round />,
  },
];

function Taskbar() {
  return (
    <footer className="flex h-[41px] shrink-0 items-center bg-[#dddbdd] text-[#222]">
      <button aria-label="Start" className="flex h-full w-12 items-center justify-center">
        <Svg w={16} h={16}><path d="M0 2l7-1v7H0zM8 1l8-1v8H8zM0 9h7v7l-7-1zM8 9h8v7H8z" fill="#111" stroke="none" /></Svg>
      </button>
      <div className="flex h-full w-[344px] items-center border border-[#c9c9c9] bg-white pl-3">
        <Svg w={18} h={18} className="text-[#222]"><circle cx="11" cy="7" r="5.500" strokeWidth="1.400" /><path d="M7 11l-6 6" strokeWidth="1.400" /></Svg>
        <input aria-label="Typ hier om te zoeken" placeholder="Typ hier om te zoeken" className="ml-[9px] flex-1 text-sm outline-none placeholder:text-[#333]" />
      </div>
      {apps.map((a) => (
        <button key={a.label} aria-label={a.label} className={`flex h-full justify-center ${a.label === 'Access' ? 'w-12 border-r border-[#c4c2c4]' : 'w-[49px] px-1'}`}>
          <span className={`flex h-full w-full items-center justify-center ${a.cls ?? ''}`}>{a.icon}</span>
        </button>
      ))}
      <div className="ml-auto flex h-full items-center text-[#222]">
        <button aria-label="Verborgen pictogrammen"><Svg w={12} h={8}><path d="M1 7l5-5 5 5" strokeWidth="1.400" /></Svg></button>
        <Svg w={13} h={18} className="ml-3"><path d="M2 2c3-1.500 5-1.500 8 0M2 16c3 1.500 5 1.500 8 0M1 5h7v8H1zM8 8l3-2v6l-3-2" strokeWidth="1.300" /></Svg>
        <Svg w={17} h={12} className="ml-2"><path d="M4 11C0 11 0 6 4 6c0-5 7-7 9-1 4 0 4 6 0 6z" fill="#999" strokeWidth="1.200" /></Svg>
        <Svg w={17} h={14} className="ml-2"><path d="M7 4h8v8H6V9M15 6h1.500v4H15" strokeWidth="1.300" /><path d="M8 6h4v4H8z" fill="currentColor" /><path d="M2 0v3M5 0v3M1 3h5v3H1zM3.500 6v4" strokeWidth="1.300" /></Svg>
        <Svg w={14} h={14} className="ml-2.5"><path d="M1 12C2 6 6 2 13 1M4 13c1-5 4-7 9-8M7 13c1-3 3-4 6-4" strokeWidth="1.300" /><circle cx="11" cy="12" r="1.500" fill="currentColor" /></Svg>
        <Svg w={17} h={14} className="ml-2"><path d="M1 5h2l4-4v12L3 9H1zM9 5c1 1 1 3 0 4M11 3c2 2 2 6 0 8M13.500 1c3 3 3 9 0 12" strokeWidth="1.200" /></Svg>
        <Svg w={23} h={14} className="ml-2"><rect x="1" y="1" width="21" height="12" strokeWidth="1.400" /><path d="M4 4h16M4 7h16" strokeWidth="1.400" strokeDasharray="1.500 1.500" /><path d="M6 10h11" strokeWidth="1.400" /></Svg>
        <span className="ml-[11px] text-[11px]">NLD</span>
        <div className="ml-3 text-center text-[11px] leading-[18px]">
          <div>23:10</div>
          <div>29/04/2021</div>
        </div>
        <button aria-label="Meldingen" className="relative mr-3 ml-[18px]">
          <Svg w={24} h={26}><path d="M1 3h15v12h-7l-3 4v-4H1z" fill="#111" stroke="none" /><path d="M3 6h11M3 9h11M3 12h8" stroke="#dddbdd" strokeWidth="1" /></Svg>
          <span className="absolute right-0 bottom-0 flex size-4 items-center justify-center rounded-full border border-[#777] bg-[#dddbdd] text-[11px] leading-none font-semibold">6</span>
        </button>
        <span className="mr-1 h-full w-px bg-[#b0aeb0]" />
      </div>
    </footer>
  );
}

export default function App() {
  return (
    <div className={'relative flex h-screen flex-col overflow-hidden bg-[#f3f2f1] font-["Open_Sans",sans-serif]'}>
      <TitleBar />
      <Ribbon />
      <SecurityBar />
      <div className="flex min-h-0 flex-1">
        <Sidebar />
        <main className="flex flex-1 flex-col">
          <div className="h-6 bg-linear-to-b from-[#e4e3e2] via-[#f3f2f1] via-30% to-[#f3f2f1]" />
          <div className="flex-1 bg-[#e6e6e6]" />
        </main>
      </div>
      <div className="flex h-[35px] shrink-0 items-center justify-between border-t border-[#c6c6c6] pr-[18px] pl-2 text-[17px] text-[#555]">
        <span>Gereed</span>
        <span>NUM-LOCK</span>
      </div>
      <Taskbar />
      <Dialog />
    </div>
  );
}
